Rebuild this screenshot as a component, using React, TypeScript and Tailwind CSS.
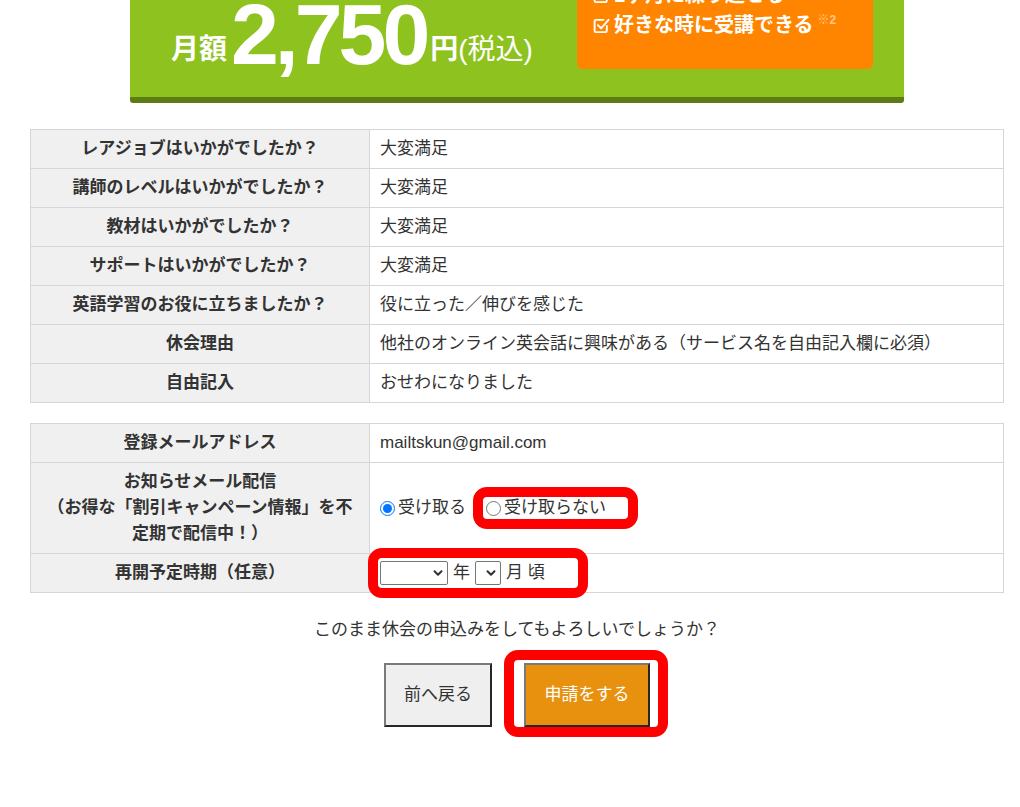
import { ChevronDown } from "lucide-react";

const surveyRows = [
  ["レアジョブはいかがでしたか？", "大変満足"],
  ["講師のレベルはいかがでしたか？", "大変満足"],
  ["教材はいかがでしたか？", "大変満足"],
  ["サポートはいかがでしたか？", "大変満足"],
  ["英語学習のお役に立ちましたか？", "役に立った／伸びを感じた"],
  ["休会理由", "他社のオンライン英会話に興味がある（サービス名を自由記入欄に必須）"],
  ["自由記入", "おせわになりました"],
];

const th =
  "w-[339px] bg-[#f0f0f0] border border-[#d6d6d6] px-[10px] py-[6px] font-bold text-center align-middle";
const td = "border border-[#d6d6d6] px-[10px] py-[6px] text-left align-middle";

function CheckIcon() {
  return (
    <svg width="17" height="17" viewBox="0 0 16 16" fill="none" stroke="white" strokeWidth="1.8" strokeLinecap="round" strokeLinejoin="round">
      <path d="M13 8.5v4.5a1.2 1.2 0 0 1-1.2 1.2H2.7A1.2 1.2 0 0 1 1.5 13V3.9a1.2 1.2 0 0 1 1.2-1.2H10" />
      <path d="M4.6 7.6l3 3L14.6 2.6" />
    </svg>
  );
}

// red annotation frame
function Mark({ className }: { className: string }) {
  return <span className={"pointer-events-none absolute rounded-[14px] border-[10px] border-[#ff0000] " + className} />;
}

function Select({ w }: { w: string }) {
  return (
    <span className="relative inline-flex">
      <select className={"appearance-none h-[24px] border border-[#767676] rounded-[2px] bg-white " + w}>
        <option value=""></option>
      </select>
      <ChevronDown className="pointer-events-none absolute right-[3px] top-[5px] w-[14px] h-[14px]" strokeWidth={3.5} />
    </span>
  );
}

export default function App() {
  return (
    <div className="min-h-[807px] bg-white text-[#333] font-['Liberation_Sans','Noto_Sans_CJK_JP',sans-serif]">
      <div className="ml-[30px] w-[974px] pb-[60px]">
        {/* BANNER */}
        <div className="mx-auto w-[774px] h-[103px] bg-[#8dc21f] border-b-[6px] border-[#5d7c14] rounded-b-[3px] overflow-hidden flex text-white">
          <div className="w-[447px] pl-[41px] -mt-[9px] flex items-baseline leading-none font-bold">
            <span className="text-[28px] -translate-y-[5px]">月額</span>
            <span className="text-[86px] tracking-[-4px] ml-[4px]">2,750</span>
            <span className="text-[28px] -translate-y-[5px] ml-[4px] font-normal">
              <span className="font-bold">円</span>(税込)
            </span>
          </div>
          <div className="w-[296px] h-[69px] bg-[#ff8500] rounded-b-[5px] overflow-hidden">
            <div className="-mt-[20px] pl-[16px] flex flex-col text-[20px] font-bold">
              <div className="h-[30px] flex items-center gap-[4px]">
                <CheckIcon />
                <span>1ヶ月に繰り越せる</span>
              </div>
              <div className="h-[30px] flex items-center gap-[4px]">
                <CheckIcon />
                <span>好きな時に受講できる</span>
                <span className="self-start mt-[1px] text-[12px] text-[#ffc88a]">※2</span>
              </div>
            </div>
          </div>
        </div>

        {/* SURVEY */}
        <table className="mt-[26px] w-[974px] border-collapse text-[17px] leading-[26px]">
          <tbody>
            {surveyRows.map(([q, a]) => (
              <tr key={q}>
                <th className={th}>{q}</th>
                <td className={td}>{a}</td>
              </tr>
            ))}
          </tbody>
        </table>

        {/* MAIL / RESTART */}
        <table className="mt-[20px] w-[974px] border-collapse text-[17px] leading-[26px]">
          <tbody>
            <tr>
              <th className={th}>登録メールアドレス</th>
              <td className={td}>mailtskun@gmail.com</td>
            </tr>
            <tr>
              <th className={th}>
                お知らせメール配信
                <br />
                （お得な「割引キャンペーン情報」を不定期で配信中！）
              </th>
              <td className={td}>
                <div className="flex items-center h-[26px]">
                  <label className="flex items-center gap-[3px]">
                    <input type="radio" name="mail" defaultChecked className="m-0 w-[15px] h-[15px]" />
                    <span>受け取る</span>
                  </label>
                  <label className="relative ml-[20px] flex items-center gap-[3px]">
                    <Mark className="-left-[13px] w-[165px] -top-[8px] -bottom-[8px]" />
                    <input type="radio" name="mail" className="m-0 w-[15px] h-[15px]" />
                    <span>受け取らない</span>
                  </label>
                </div>
              </td>
            </tr>
            <tr>
              <th className={th}>再開予定時期（任意）</th>
              <td className={td}>
                <div className="relative flex h-[26px] items-center gap-[5px]">
                  <Mark className="-left-[12px] w-[220px] -top-[12px] -bottom-[12px]" />
                  <Select w="w-[68px]" />
                  <span>年</span>
                  <Select w="w-[26px]" />
                  <span>月 頃</span>
                </div>
              </td>
            </tr>
          </tbody>
        </table>

        <p className="mt-[24px] text-center text-[17px] leading-[26px]">このまま休会の申込みをしてもよろしいでしょうか？</p>

        <div className="mt-[20px] flex justify-center gap-[32px] text-[17px]">
          <button className="w-[108px] h-[64px] bg-[#efefef] border-2 border-t-[#7a7a7a] border-l-[#7a7a7a] border-b-[#262626] border-r-[#262626] text-[#333]">
            前へ戻る
          </button>
          <div className="relative">
            <Mark className="-left-[20px] -right-[18px] -top-[13px] -bottom-[10px]" />
            <button className="w-[126px] h-[64px] bg-[#e8910f] border-2 border-t-[#7a7a7a] border-l-[#7a7a7a] border-b-[#262626] border-r-[#262626] text-white">
              申請をする
            </button>
          </div>
        </div>
      </div>
    </div>
  );
}
